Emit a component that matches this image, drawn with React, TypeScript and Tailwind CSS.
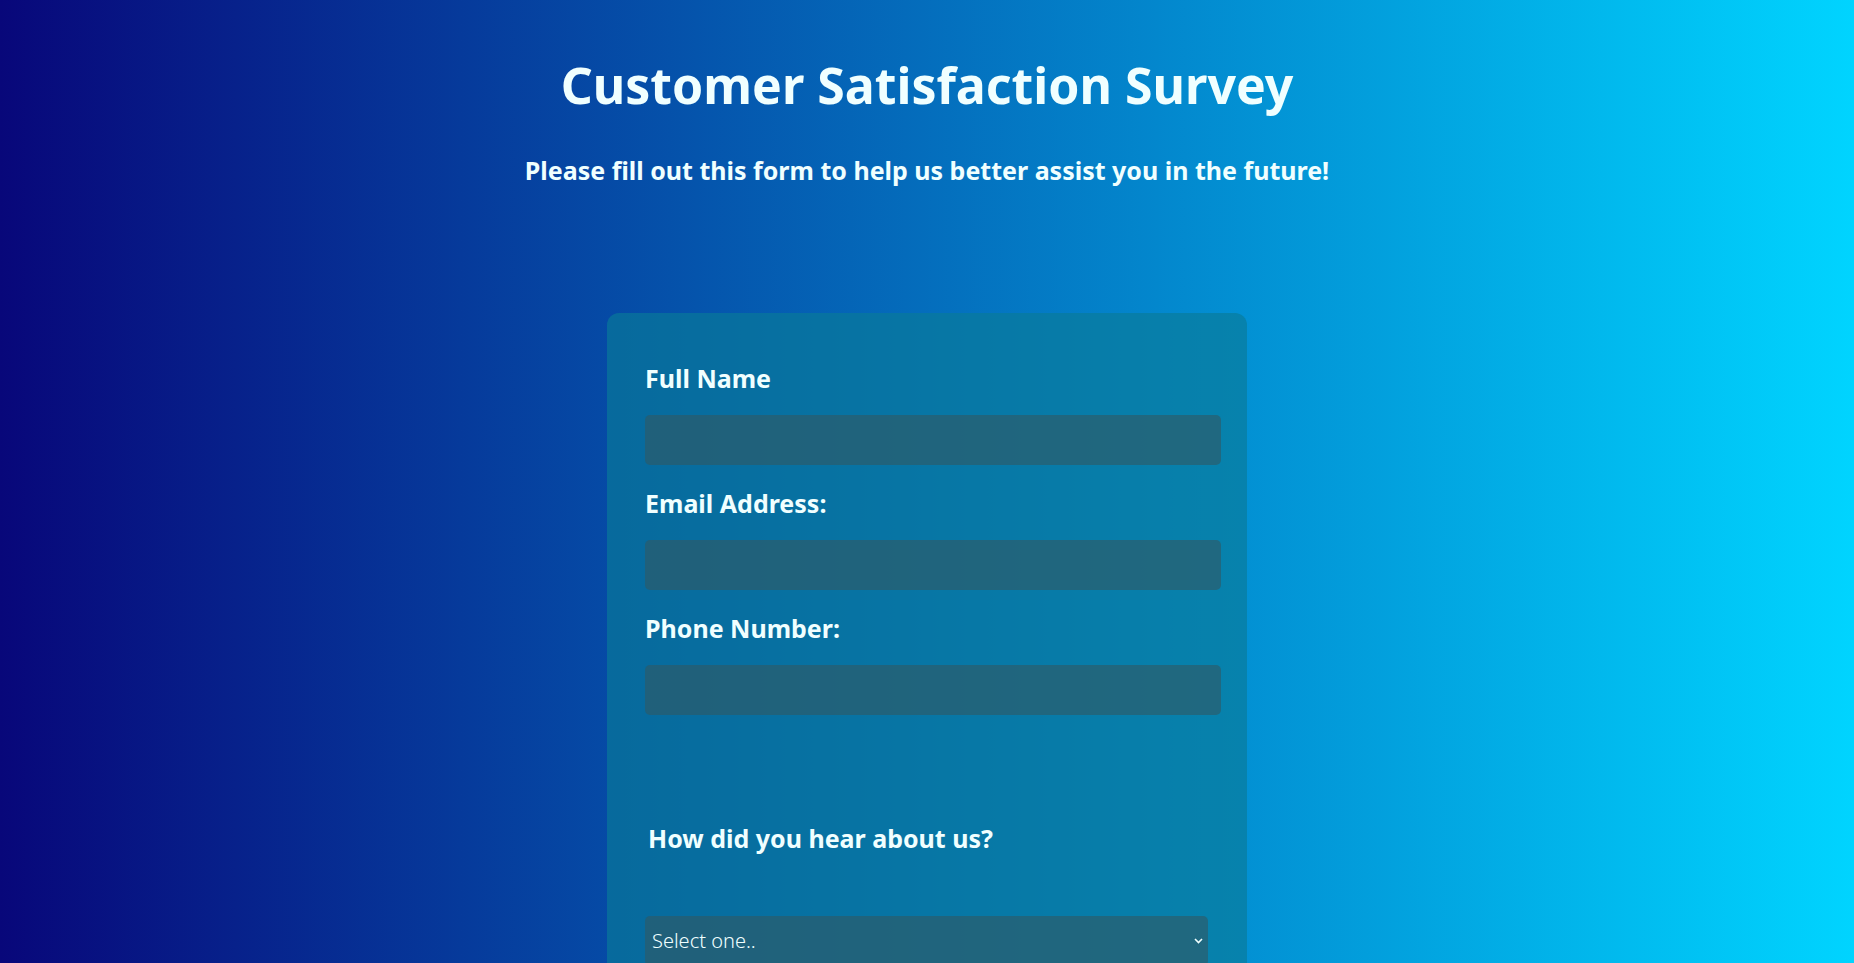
import React from "react";

const font = { fontFamily: '"Noto Sans", "Open Sans", sans-serif' };

function Field({ label }: { label: string }) {
  return (
    <div className="flex flex-col">
      <label className="block text-[25px] leading-[24px] font-bold text-[#f0ffff]">{label}</label>
      <input
        type="text"
        className="mt-[25px] mb-[26px] h-[50px] w-[576px] rounded-[5px] border-0 bg-[rgba(50,88,98,0.6)] outline-none"
      />
    </div>
  );
}

export default function App() {
  return (
    <div
      className="min-h-screen w-full bg-[linear-gradient(90deg,#08077a_0%,#00d4ff_100%)] pb-[80px]"
      style={font}
    >
      <div className="flex flex-col items-center pt-[60px]">
        <h1 className="text-[50px] leading-[50px] font-bold text-[#f0ffff]">Customer Satisfaction Survey</h1>
        <p className="mt-[48px] text-[25px] leading-[25px] font-bold text-[#f0ffff]">
          Please fill out this form to help us better assist you in the future!
        </p>
      </div>
      <div className="mx-auto mt-[130px] w-[640px] rounded-[12px] bg-[rgba(9,123,152,0.65)] pl-[38px] pr-[26px] pt-[53px] pb-[60px]">
        <Field label="Full Name" />
        <Field label="Email Address:" />
        <Field label="Phone Number:" />
        <div className="mt-[85px] pl-[3px] text-[25px] leading-[24px] font-bold text-[#f0ffff]">
          How did you hear about us?
        </div>
        <div className="relative mt-[66px] w-[563px]">
          <select className="h-[50px] w-full appearance-none rounded-[5px] border-0 bg-[rgba(50,88,98,0.6)] pl-[7px] text-[20px] font-light text-[#f0ffff] outline-none">
            <option>Select one..</option>
            <option>Friend</option>
            <option>Advertisement</option>
            <option>Other</option>
          </select>
          <svg
            className="pointer-events-none absolute right-[5px] top-[22px]"
            width="9"
            height="6"
            viewBox="0 0 9 6"
            fill="none"
          >
            <path d="M1 1l3.5 3.5L8 1" stroke="#f0ffff" strokeWidth="1.6" />
          </svg>
        </div>
      </div>
    </div>
  );
}
